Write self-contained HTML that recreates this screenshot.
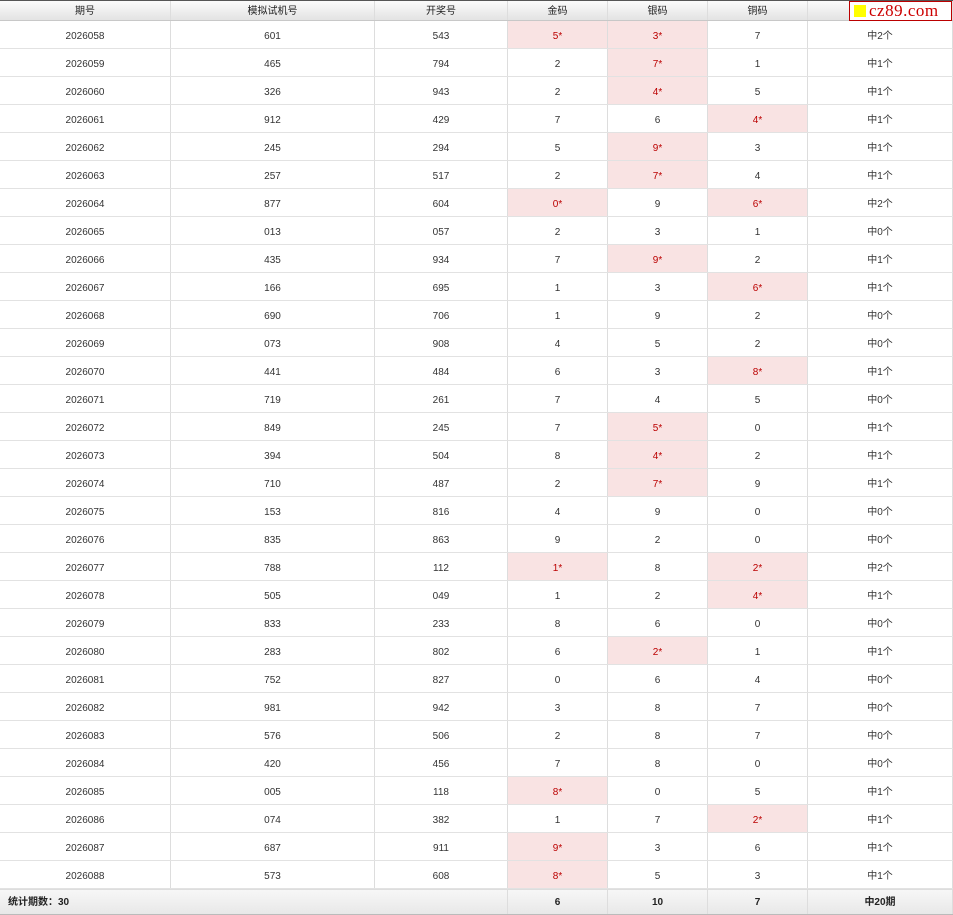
<!DOCTYPE html>
<html><head><meta charset="utf-8"><style>
*{margin:0;padding:0;box-sizing:border-box}
body{width:953px;height:915px;background:#fff;font-family:"Liberation Sans","Noto Sans CJK SC",sans-serif;font-size:10px;color:#333;position:relative;overflow:hidden}
.r{display:flex;height:28px;border-bottom:1px solid #e2e2e2}
.r div{border-right:1px solid #ddd;display:block;text-align:center;height:100%;line-height:12px;padding-top:10px;white-space:nowrap}
.c1{width:171px}.c2{width:204px}.c3{width:133px}.c4,.c5,.c6{width:100px}.c7{width:145px}
.h{background:#f9e3e3;color:#b00}
.r.hd{height:21px;border-top:1px solid #555;border-bottom:1px solid #c8c8c8;background:linear-gradient(#fbfbfb,#e3e3e3);color:#222}
.r.hd div{padding-top:5px}
.r.ft{height:26px;border-top:1px solid #ddd;border-bottom:1px solid #bbb;background:linear-gradient(#f7f7f7,#e8e8e8);font-weight:bold;color:#222}
.r.ft div{padding-top:7px}
.r.ft .f1{width:508px;text-align:left;padding-left:8px}
.logo{position:absolute;left:849px;top:1px;width:103px;height:20px;border:1px solid #b00;background:#fff;display:flex;align-items:center}
.logo span.sq{display:inline-block;width:12px;height:12px;background:#ff0;margin:0 3px 0 4px}
.logo span.t{font-family:"Liberation Serif",serif;font-size:17px;color:#c00;letter-spacing:0.5px;line-height:18px}
</style></head><body>
<div class="r hd"><div class="c1">期号</div><div class="c2">模拟试机号</div><div class="c3">开奖号</div><div class="c4">金码</div><div class="c5">银码</div><div class="c6">铜码</div><div class="c7">命中</div></div>
<div class="r"><div class="c1">2026058</div><div class="c2">601</div><div class="c3">543</div><div class="c4 h">5*</div><div class="c5 h">3*</div><div class="c6">7</div><div class="c7">中2个</div></div>
<div class="r"><div class="c1">2026059</div><div class="c2">465</div><div class="c3">794</div><div class="c4">2</div><div class="c5 h">7*</div><div class="c6">1</div><div class="c7">中1个</div></div>
<div class="r"><div class="c1">2026060</div><div class="c2">326</div><div class="c3">943</div><div class="c4">2</div><div class="c5 h">4*</div><div class="c6">5</div><div class="c7">中1个</div></div>
<div class="r"><div class="c1">2026061</div><div class="c2">912</div><div class="c3">429</div><div class="c4">7</div><div class="c5">6</div><div class="c6 h">4*</div><div class="c7">中1个</div></div>
<div class="r"><div class="c1">2026062</div><div class="c2">245</div><div class="c3">294</div><div class="c4">5</div><div class="c5 h">9*</div><div class="c6">3</div><div class="c7">中1个</div></div>
<div class="r"><div class="c1">2026063</div><div class="c2">257</div><div class="c3">517</div><div class="c4">2</div><div class="c5 h">7*</div><div class="c6">4</div><div class="c7">中1个</div></div>
<div class="r"><div class="c1">2026064</div><div class="c2">877</div><div class="c3">604</div><div class="c4 h">0*</div><div class="c5">9</div><div class="c6 h">6*</div><div class="c7">中2个</div></div>
<div class="r"><div class="c1">2026065</div><div class="c2">013</div><div class="c3">057</div><div class="c4">2</div><div class="c5">3</div><div class="c6">1</div><div class="c7">中0个</div></div>
<div class="r"><div class="c1">2026066</div><div class="c2">435</div><div class="c3">934</div><div class="c4">7</div><div class="c5 h">9*</div><div class="c6">2</div><div class="c7">中1个</div></div>
<div class="r"><div class="c1">2026067</div><div class="c2">166</div><div class="c3">695</div><div class="c4">1</div><div class="c5">3</div><div class="c6 h">6*</div><div class="c7">中1个</div></div>
<div class="r"><div class="c1">2026068</div><div class="c2">690</div><div class="c3">706</div><div class="c4">1</div><div class="c5">9</div><div class="c6">2</div><div class="c7">中0个</div></div>
<div class="r"><div class="c1">2026069</div><div class="c2">073</div><div class="c3">908</div><div class="c4">4</div><div class="c5">5</div><div class="c6">2</div><div class="c7">中0个</div></div>
<div class="r"><div class="c1">2026070</div><div class="c2">441</div><div class="c3">484</div><div class="c4">6</div><div class="c5">3</div><div class="c6 h">8*</div><div class="c7">中1个</div></div>
<div class="r"><div class="c1">2026071</div><div class="c2">719</div><div class="c3">261</div><div class="c4">7</div><div class="c5">4</div><div class="c6">5</div><div class="c7">中0个</div></div>
<div class="r"><div class="c1">2026072</div><div class="c2">849</div><div class="c3">245</div><div class="c4">7</div><div class="c5 h">5*</div><div class="c6">0</div><div class="c7">中1个</div></div>
<div class="r"><div class="c1">2026073</div><div class="c2">394</div><div class="c3">504</div><div class="c4">8</div><div class="c5 h">4*</div><div class="c6">2</div><div class="c7">中1个</div></div>
<div class="r"><div class="c1">2026074</div><div class="c2">710</div><div class="c3">487</div><div class="c4">2</div><div class="c5 h">7*</div><div class="c6">9</div><div class="c7">中1个</div></div>
<div class="r"><div class="c1">2026075</div><div class="c2">153</div><div class="c3">816</div><div class="c4">4</div><div class="c5">9</div><div class="c6">0</div><div class="c7">中0个</div></div>
<div class="r"><div class="c1">2026076</div><div class="c2">835</div><div class="c3">863</div><div class="c4">9</div><div class="c5">2</div><div class="c6">0</div><div class="c7">中0个</div></div>
<div class="r"><div class="c1">2026077</div><div class="c2">788</div><div class="c3">112</div><div class="c4 h">1*</div><div class="c5">8</div><div class="c6 h">2*</div><div class="c7">中2个</div></div>
<div class="r"><div class="c1">2026078</div><div class="c2">505</div><div class="c3">049</div><div class="c4">1</div><div class="c5">2</div><div class="c6 h">4*</div><div class="c7">中1个</div></div>
<div class="r"><div class="c1">2026079</div><div class="c2">833</div><div class="c3">233</div><div class="c4">8</div><div class="c5">6</div><div class="c6">0</div><div class="c7">中0个</div></div>
<div class="r"><div class="c1">2026080</div><div class="c2">283</div><div class="c3">802</div><div class="c4">6</div><div class="c5 h">2*</div><div class="c6">1</div><div class="c7">中1个</div></div>
<div class="r"><div class="c1">2026081</div><div class="c2">752</div><div class="c3">827</div><div class="c4">0</div><div class="c5">6</div><div class="c6">4</div><div class="c7">中0个</div></div>
<div class="r"><div class="c1">2026082</div><div class="c2">981</div><div class="c3">942</div><div class="c4">3</div><div class="c5">8</div><div class="c6">7</div><div class="c7">中0个</div></div>
<div class="r"><div class="c1">2026083</div><div class="c2">576</div><div class="c3">506</div><div class="c4">2</div><div class="c5">8</div><div class="c6">7</div><div class="c7">中0个</div></div>
<div class="r"><div class="c1">2026084</div><div class="c2">420</div><div class="c3">456</div><div class="c4">7</div><div class="c5">8</div><div class="c6">0</div><div class="c7">中0个</div></div>
<div class="r"><div class="c1">2026085</div><div class="c2">005</div><div class="c3">118</div><div class="c4 h">8*</div><div class="c5">0</div><div class="c6">5</div><div class="c7">中1个</div></div>
<div class="r"><div class="c1">2026086</div><div class="c2">074</div><div class="c3">382</div><div class="c4">1</div><div class="c5">7</div><div class="c6 h">2*</div><div class="c7">中1个</div></div>
<div class="r"><div class="c1">2026087</div><div class="c2">687</div><div class="c3">911</div><div class="c4 h">9*</div><div class="c5">3</div><div class="c6">6</div><div class="c7">中1个</div></div>
<div class="r"><div class="c1">2026088</div><div class="c2">573</div><div class="c3">608</div><div class="c4 h">8*</div><div class="c5">5</div><div class="c6">3</div><div class="c7">中1个</div></div>
<div class="r ft"><div class="f1">统计期数：30</div><div class="c4">6</div><div class="c5">10</div><div class="c6">7</div><div class="c7">中20期</div></div>
<div class="logo"><span class="sq"></span><span class="t">cz89.com</span></div>
</body></html>
